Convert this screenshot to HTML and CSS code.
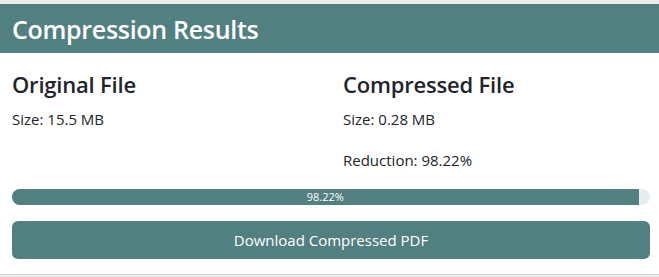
FILE: index.html
```html
<!DOCTYPE html>
<html lang="en">
<head>
<meta charset="utf-8">
<title>Compression Results</title>
<link rel="stylesheet" href="styles.css">
</head>
<body>
<section class="card">
  <header class="card-header">
    <h2 class="card-title">Compression Results</h2>
  </header>
  <div class="card-body">
    <div class="columns">
      <div class="col">
        <h3 class="col-title">Original File</h3>
        <p class="stat">Size: 15.5 MB</p>
      </div>
      <div class="col">
        <h3 class="col-title">Compressed File</h3>
        <p class="stat">Size: 0.28 MB</p>
        <p class="stat stat-gap">Reduction: 98.22%</p>
      </div>
    </div>
    <div class="progress">
      <div class="progress-fill" style="width: 98.22%">98.22%</div>
    </div>
    <button class="download-btn" type="button">Download Compressed PDF</button>
  </div>
</section>
</body>
</html>
```
FILE: styles.css
```css
* { box-sizing: border-box; }

html, body {
  margin: 0;
  padding: 0;
}

body {
  background: #eceeee;
  font-family: "Open Sans", "Noto Sans", sans-serif;
  color: #212529;
  padding-top: 4px;
  height: 277px;
  overflow: hidden;
}

.card {
  background: #ffffff;
  border-bottom: 1px solid #cfd2d2;
}

.card-header {
  background: #527f80;
  height: 49px;
  padding: 0 12px;
  display: flex;
  align-items: center;
}

.card-title {
  margin: 0;
  color: #ffffff;
  font-size: 25px;
  font-weight: 600;
  line-height: 1.2;
  letter-spacing: -0.3px;
}

.card-body {
  padding: 18px 9px 15px 12px;
}

.columns {
  display: grid;
  grid-template-columns: 1fr 1fr;
  column-gap: 24px;
}

.col-title {
  margin: 0 0 10px;
  font-size: 22px;
  font-weight: 600;
  line-height: 1.2;
  letter-spacing: -0.2px;
}

.stat {
  margin: 0;
  font-size: 15px;
  line-height: 24px;
}

.stat-gap {
  margin-top: 17px;
}

.progress {
  margin-top: 17px;
  height: 16px;
  background: #e9ecef;
  border-radius: 8px;
  overflow: hidden;
  display: flex;
}

.progress-fill {
  background: #527f80;
  color: #ffffff;
  font-size: 11px;
  line-height: 16px;
  text-align: center;
  white-space: nowrap;
}

.download-btn {
  display: block;
  width: 100%;
  margin-top: 16px;
  height: 38px;
  border: 0;
  border-radius: 6px;
  background: #527f80;
  color: #ffffff;
  font-family: inherit;
  font-size: 15px;
  line-height: 38px;
  padding: 0;
}
```
